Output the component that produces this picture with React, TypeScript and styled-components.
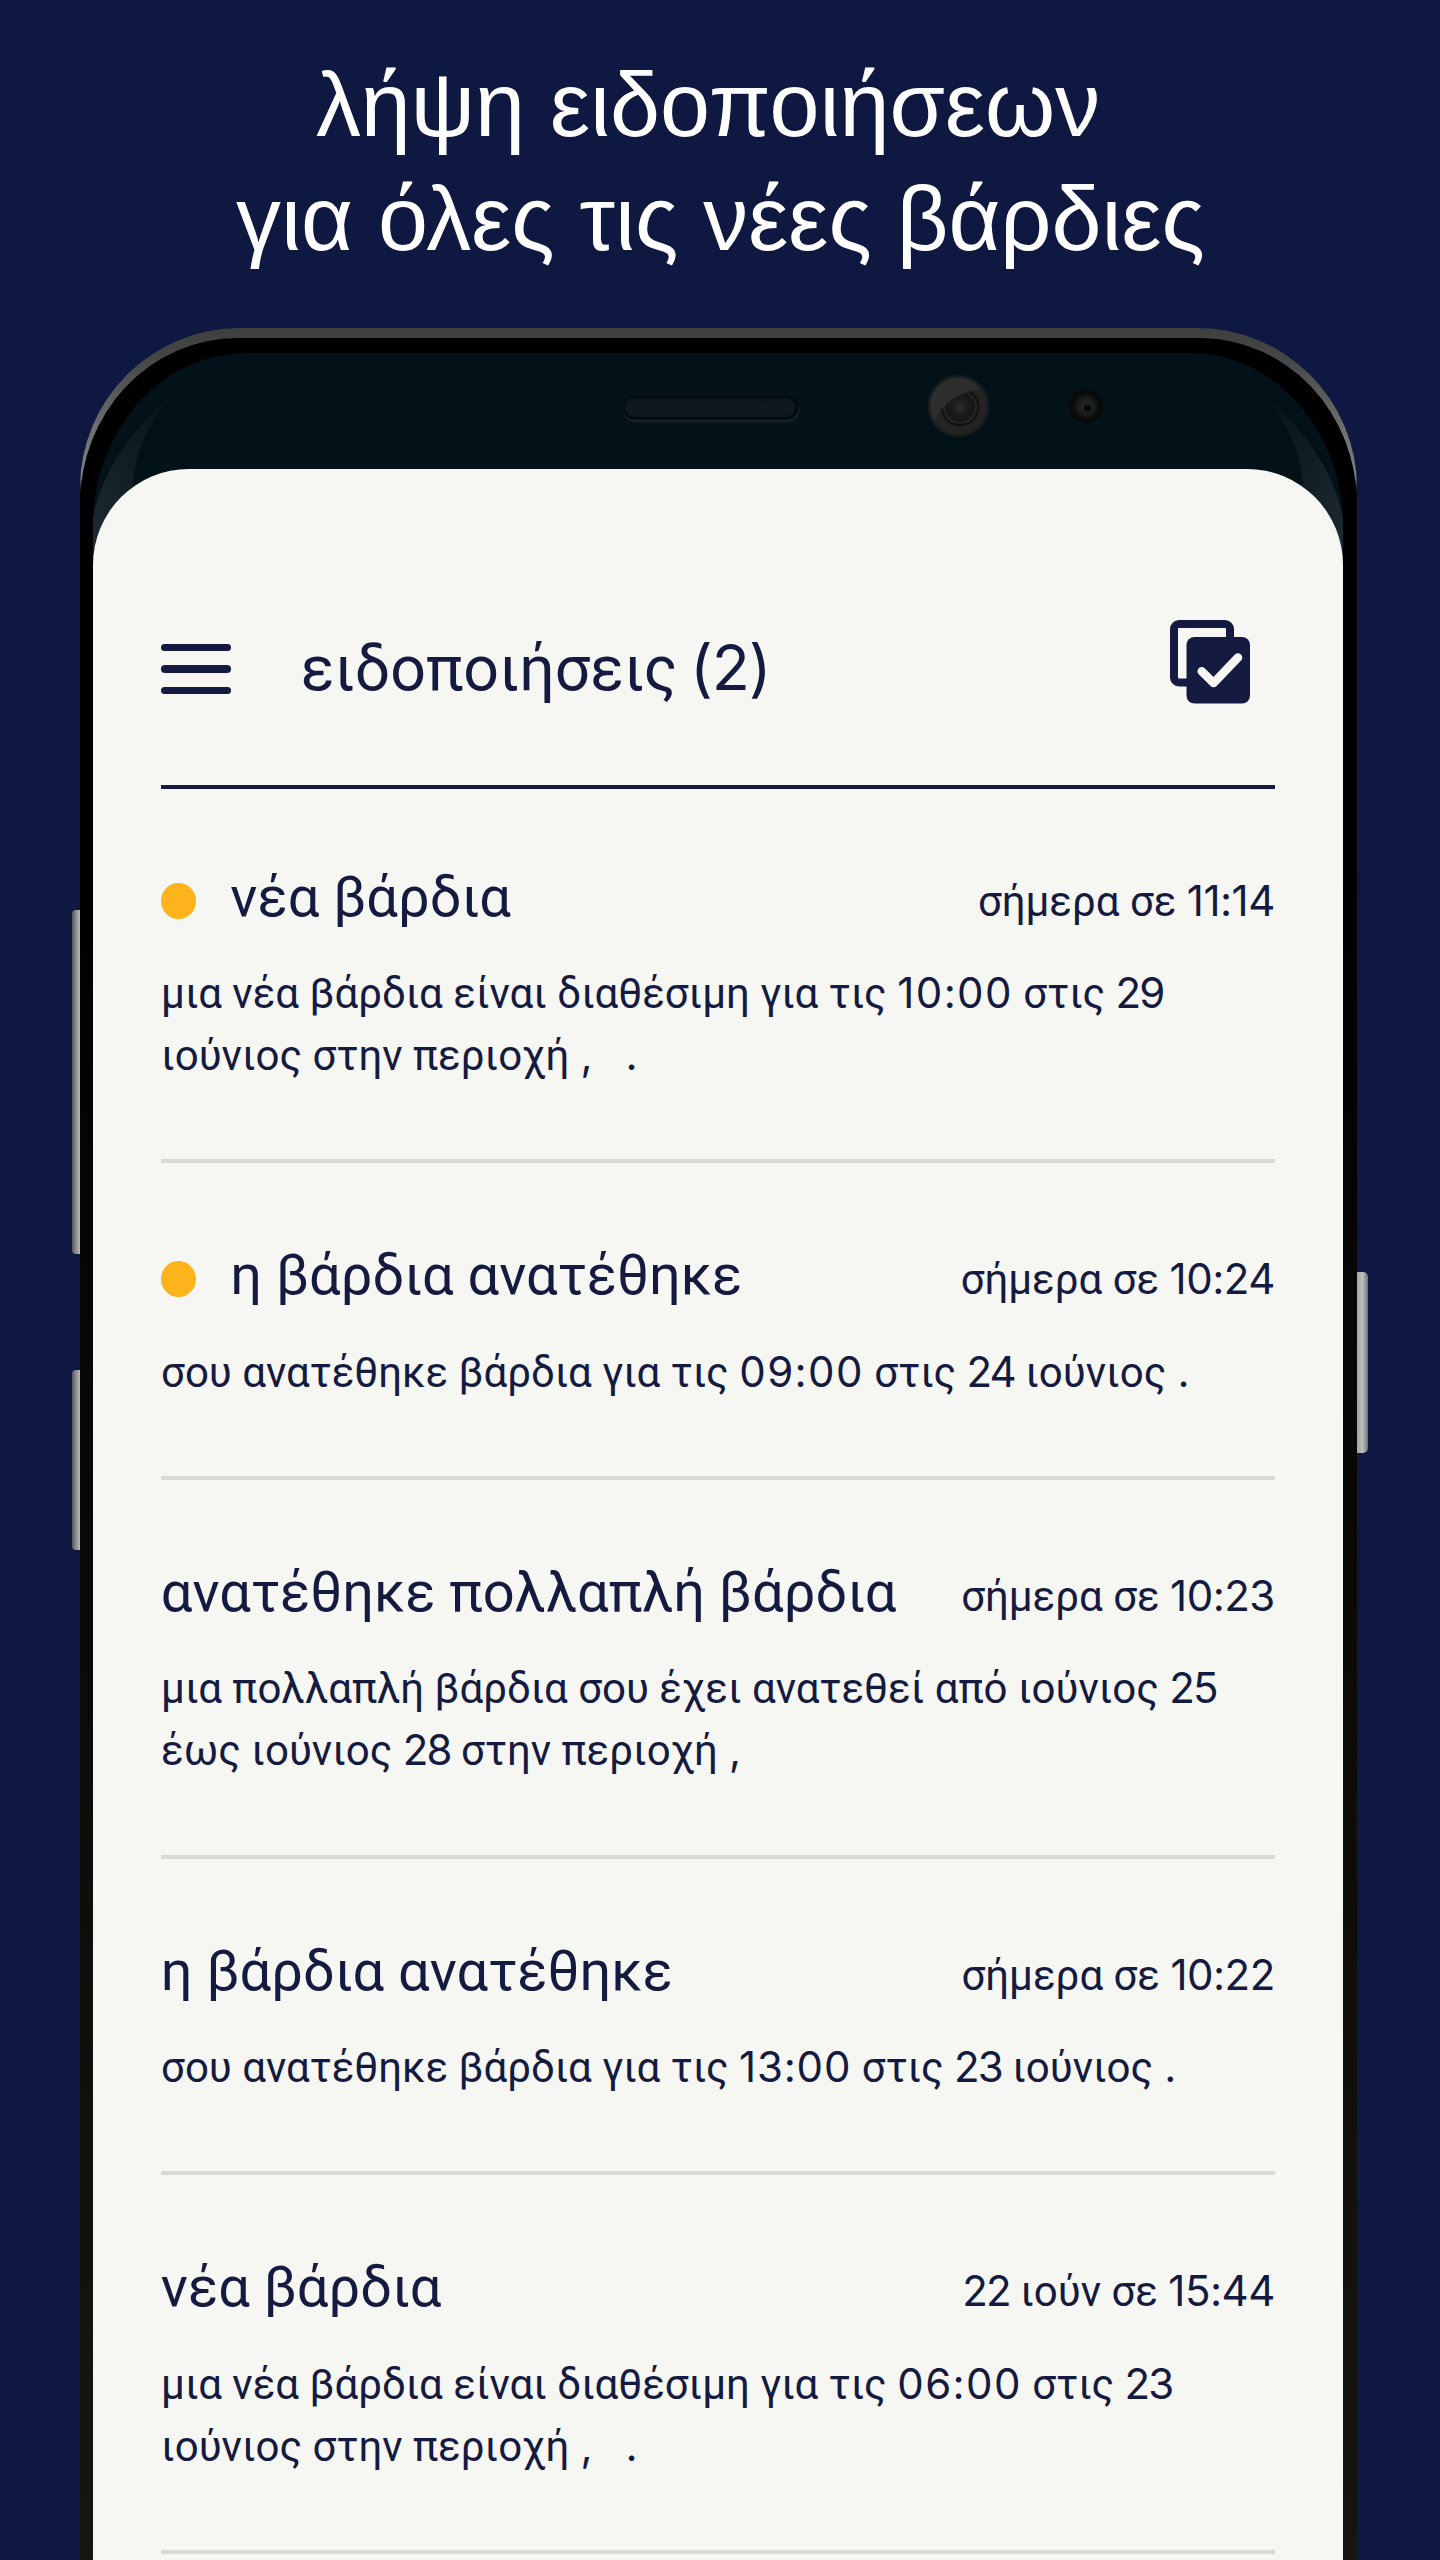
import React from 'react';
import styled, { createGlobalStyle } from 'styled-components';

const NAVY = '#0f1840';
const INK = '#141a40';
const PAPER = '#f6f7f2';

const GlobalStyle = createGlobalStyle`
  html, body { margin: 0; background: ${NAVY}; }
  *, *::before, *::after { box-sizing: border-box; }
`;

const Page = styled.main`
  width: 1440px;
  height: 2560px;
  overflow: hidden;
  background: ${NAVY};
  font-family: Roboto, "Noto Sans", sans-serif;
  color: ${INK};
`;

const Headline = styled.h1`
  height: 328px;
  margin: 0;
  padding: 48px 0 0 1px;
  font: 400 89.9px/114px "Liberation Sans", Arial, sans-serif;
  text-align: center;
  white-space: pre;
  color: #fff;
`;

const Stage = styled.div`
  display: flex;
  padding-left: 72px;
  height: 2232px;
`;

const Rail = styled.div<{ $top: number; $side: 'left' | 'right' }>`
  display: flex;
  flex-direction: column;
  gap: 116px;
  width: ${p => (p.$side === 'left' ? 8 : 11)}px;
  padding-top: ${p => p.$top}px;
`;

const SideKey = styled.div<{ $h: number; $side: 'left' | 'right' }>`
  height: ${p => p.$h}px;
  border-radius: ${p => (p.$side === 'left' ? '4px 0 0 4px' : '0 5px 5px 0')};
  background: ${p =>
    p.$side === 'left'
      ? 'linear-gradient(90deg, #56595c, #8a8d8e 50%, #b9bbba)'
      : 'linear-gradient(90deg, #a3a5a5, #bcbdbd 50%, #6f7476)'};
`;

const Phone = styled.div`
  width: 1276.5px;
  padding-top: 10px;
  border-radius: 160px 160px 0 0;
  background: linear-gradient(180deg, #3d403d 0, #454745 30px, #6c6e6f 100px, #808284 150px, #000 166px);
`;

const Bezel = styled.div`
  height: 100%;
  padding: 15px 13.2px 0 13.3px;
  border-radius: 157px 157px 0 0 / 166px 166px 0 0;
  background: linear-gradient(180deg, #000 0, #000 500px, #161511 2222px);
`;

const Glass = styled.div`
  display: flex;
  flex-direction: column;
  height: 100%;
  overflow: hidden;
  border-radius: 153px 153px 0 0 / 172px 172px 0 0;
  background: #031118;
`;

const BezelArt = styled.svg`
  display: block;
  flex: none;
  width: 1250px;
  height: 216px;
`;

const Screen = styled.section`
  flex: 1;
  margin-top: -100.5px;
  padding: 0 68.5px 0 67.5px;
  border-radius: 96px 96px 0 0;
  background: ${PAPER};
`;

const Header = styled.header`
  display: flex;
  align-items: flex-start;
  height: 320.5px;
  padding: 151.5px 25px 0 0;
  border-bottom: 4px solid ${INK};
`;

const Burger = styled.div`
  display: flex;
  flex-direction: column;
  gap: 14px;
  width: 70px;
  margin: 23.5px 70px 0 0;
`;

const Bar = styled.i`
  height: 7.6px;
  border-radius: 4px;
  background: ${INK};
`;

const ScreenTitle = styled.h2`
  flex: 1;
  margin: 6.5px 0 0;
  font-size: 62.6px;
  font-weight: 400;
  line-height: 84px;
  white-space: pre;
`;

const ReadAllIcon = styled.svg`
  width: 80px;
  height: 84px;
`;

const Item = styled.article<{ $first: boolean }>`
  padding: ${p => (p.$first ? 75.6 : 80)}px 0 72.2px;
  border-bottom: 4px solid #d8dad6;
`;

const ItemHead = styled.div`
  display: flex;
  align-items: flex-start;
  height: 66px;
  white-space: pre;
`;

const Dot = styled.i`
  width: 35px;
  height: 36px;
  margin: 18px 34.5px 0 0;
  border-radius: 50%;
  background: #fdb31b;
`;

const ItemTitle = styled.h3`
  flex: 1;
  margin: 0;
  font-size: 56px;
  font-weight: 400;
  line-height: 65.5px;
`;

const Time = styled.time`
  font-size: 42px;
  line-height: 73px;
`;

const Body = styled.p`
  margin: 32.5px 0 0 0.3px;
  font-size: 42px;
  line-height: 62px;
  white-space: pre;
`;

const Num = styled.span<{ $track: number; $shift: number }>`
  margin-left: ${p => p.$shift}px;
  font-family: Inter, Roboto, sans-serif;
  line-height: 0;
  letter-spacing: ${p => p.$track}em;
`;

/* Tracking (em) and lead-in (px) for each kind of figure run. */
const fit = (run: string): [number, number] => {
  if (/\(/.test(run)) return [-0.018, -3];
  if (/[,.]/.test(run)) return [-0.015, 0];
  if (/1[1-9]:00/.test(run)) return [0.02, 0];
  if (/:00/.test(run)) return [0.033, 0.3];
  if (/:/.test(run)) return [-0.012, 0];
  return [-0.045, 0];
};

function Mixed({ text }: { text: string }) {
  return (
    <>
      {text.split(/([0-9:()]+|[ ]*[,.][ ,.]*)/).map((run, i) => {
        if (i % 2 === 0) return run;
        const [track, shift] = fit(run);
        return <Num key={i} $track={track} $shift={shift}>{run}</Num>;
      })}
    </>
  );
}

const items = [
  {
    unread: true,
    title: 'νέα βάρδια',
    time: 'σήμερα σε 11:14',
    body: 'μια νέα βάρδια είναι διαθέσιμη για τις 10:00 στις 29\nιούνιος στην περιοχή ,   .',
  },
  {
    unread: true,
    title: 'η βάρδια ανατέθηκε',
    time: 'σήμερα σε 10:24',
    body: 'σου ανατέθηκε βάρδια για τις 09:00 στις 24 ιούνιος .',
  },
  {
    unread: false,
    title: 'ανατέθηκε πολλαπλή βάρδια',
    time: 'σήμερα σε 10:23',
    body: 'μια πολλαπλή βάρδια σου έχει ανατεθεί από ιούνιος 25\nέως ιούνιος 28 στην περιοχή ,',
  },
  {
    unread: false,
    title: 'η βάρδια ανατέθηκε',
    time: 'σήμερα σε 10:22',
    body: 'σου ανατέθηκε βάρδια για τις 13:00 στις 23 ιούνιος .',
  },
  {
    unread: false,
    title: 'νέα βάρδια',
    time: '22 ιούν σε 15:44',
    body: 'μια νέα βάρδια είναι διαθέσιμη για τις 06:00 στις 23\nιούνιος στην περιοχή ,   .',
  },
];

function TopBezel() {
  return (
    <BezelArt viewBox="0 0 1250 216" aria-hidden="true">
      <defs>
        <linearGradient id="shine" x1="0" y1="0.8" x2="1" y2="0.1">
          <stop offset="0" stopColor="#1b2930" />
          <stop offset="0.5" stopColor="#111d23" />
          <stop offset="1" stopColor="#051219" />
        </linearGradient>
        <linearGradient id="slot" x1="0" y1="0" x2="0" y2="1">
          <stop offset="0" stopColor="#07131a" />
          <stop offset="0.35" stopColor="#0e1920" />
          <stop offset="1" stopColor="#0b161d" />
        </linearGradient>
        <radialGradient id="lens">
          <stop offset="0" stopColor="#2b2c2c" />
          <stop offset="0.6" stopColor="#1a1b1b" />
          <stop offset="1" stopColor="#141515" />
        </radialGradient>
        <radialGradient id="sensor">
          <stop offset="0" stopColor="#242626" />
          <stop offset="0.5" stopColor="#1b1c1c" />
          <stop offset="0.75" stopColor="#0a0b0b" />
          <stop offset="1" stopColor="#07090a" />
        </radialGradient>
        <clipPath id="cameraDisc"><circle cx="865.4" cy="53" r="28.5" /></clipPath>
        <g id="glint">
          <path d="M0 216V165C8 122 36 78 82 39C56 70 44 94 40 130V216Z" fill="url(#shine)" />
        </g>
      </defs>
      <use href="#glint" />
      <use href="#glint" transform="translate(1250 0) scale(-1 1)" />
      <rect x="530.5" y="45" width="176" height="24.5" rx="12" fill="#11212a" />
      <rect x="530.5" y="43" width="174.5" height="23.5" rx="11" fill="#01090e" />
      <rect x="532" y="44.5" width="170" height="19.5" rx="9" fill="url(#slot)" />
      <circle cx="865.4" cy="53" r="31" fill="#191b1c" />
      <circle cx="865.4" cy="53" r="28.5" fill="#232323" />
      <circle cx="867" cy="54" r="19.5" fill="#131313" />
      <circle cx="867" cy="54" r="17" fill="#242525" />
      <circle cx="867" cy="54" r="15" fill="url(#lens)" />
      <path clipPath="url(#cameraDisc)" d="M830 20H880L885 36C866 40 848 50 841 70L830 78Z" fill="#2d2d2d" />
      <circle cx="993" cy="53.5" r="17" fill="url(#sensor)" />
      <circle cx="994.5" cy="55" r="3.5" fill="#070808" />
    </BezelArt>
  );
}

export default function App() {
  return (
    <>
      <GlobalStyle />
      <Page>
        <Headline>{'λήψη ειδοποιήσεων\u00a0\nγια όλες τις νέες βάρδιες'}</Headline>
        <Stage>
          <Rail $side="left" $top={582}>
            <SideKey $side="left" $h={344} />
            <SideKey $side="left" $h={180} />
          </Rail>
          <Phone>
            <Bezel>
              <Glass>
                <TopBezel />
                <Screen>
                  <Header>
                    <Burger><Bar /><Bar /><Bar /></Burger>
                    <ScreenTitle><Mixed text="ειδοποιήσεις (2)" /></ScreenTitle>
                    <ReadAllIcon viewBox="0 0 80 84" fill="none">
                      <rect x="4" y="4" width="56" height="58.5" rx="5" stroke={INK} strokeWidth="8" />
                      <rect x="16.5" y="17" width="63.5" height="66.5" rx="8" fill={INK} />
                      <path d="M31.7 51.2L43.6 63L68 37.5" stroke={PAPER} strokeWidth="8.5" strokeLinecap="round" strokeLinejoin="round" />
                    </ReadAllIcon>
                  </Header>
                  {items.map((item, i) => (
                    <Item key={i} $first={i === 0}>
                      <ItemHead>
                        {item.unread && <Dot />}
                        <ItemTitle>{item.title}</ItemTitle>
                        <Time><Mixed text={item.time} /></Time>
                      </ItemHead>
                      <Body><Mixed text={item.body} /></Body>
                    </Item>
                  ))}
                </Screen>
              </Glass>
            </Bezel>
          </Phone>
          <Rail $side="right" $top={944}>
            <SideKey $side="right" $h={181} />
          </Rail>
        </Stage>
      </Page>
    </>
  );
}
